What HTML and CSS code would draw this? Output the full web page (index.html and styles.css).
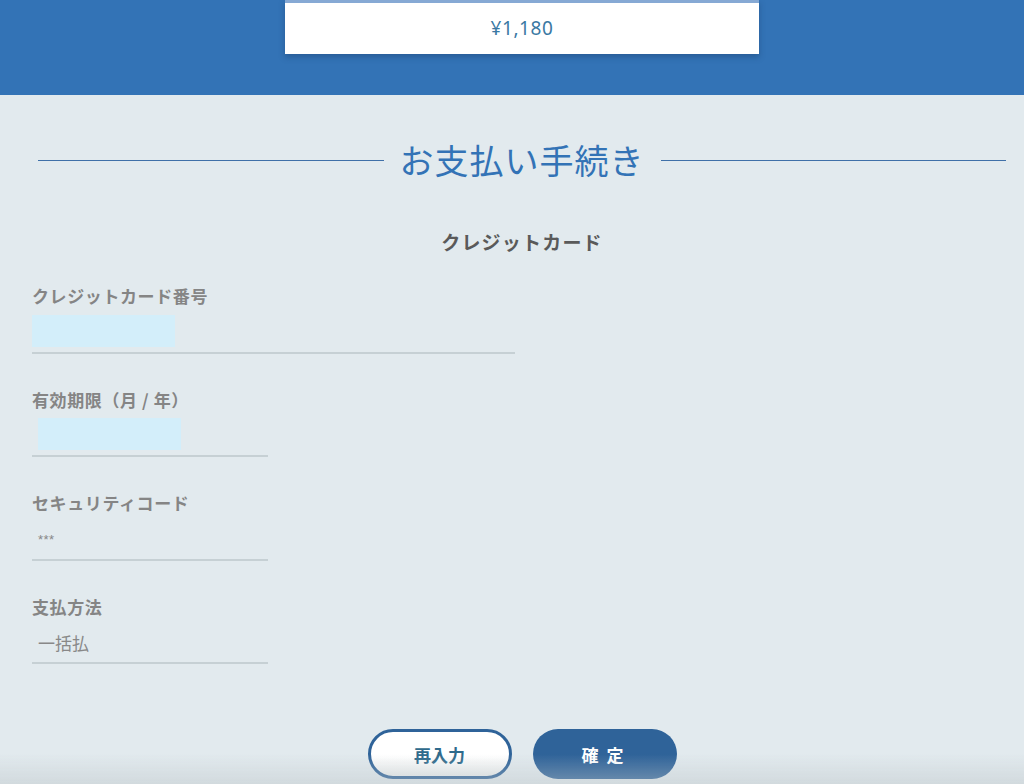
FILE: index.html
```html
<!DOCTYPE html>
<html lang="ja">
<head>
  <meta charset="UTF-8">
  <title>お支払い手続き</title>
  <meta name="viewport" content="width=device-width, initial-scale=1">
  <link rel="stylesheet" href="styles.css">
</head>
<body>
  <header class="top-band">
    <div class="price-box">¥1,180</div>
  </header>

  <main class="page">
    <h1 class="page-title"><span>お支払い手続き</span></h1>

    <h2 class="method-title">クレジットカード</h2>

    <form class="pay-form">
      <div class="field">
        <label>クレジットカード番号</label>
        <div class="input-line wide">
          <div class="autofill"></div>
        </div>
      </div>

      <div class="field">
        <label>有効期限（月 / 年）</label>
        <div class="input-line">
          <div class="autofill shifted"></div>
        </div>
      </div>

      <div class="field">
        <label>セキュリティコード</label>
        <div class="input-line">
          <span class="masked">***</span>
        </div>
      </div>

      <div class="field">
        <label>支払方法</label>
        <div class="input-line">
          <span class="value">一括払</span>
        </div>
      </div>

      <div class="actions">
        <button type="button" class="btn btn-reset">再入力</button>
        <button type="button" class="btn btn-submit">確 定</button>
      </div>
    </form>
  </main>

  <div class="bottom-fade"></div>
</body>
</html>
```

FILE: styles.css
```css
html, body {
  margin: 0;
  padding: 0;
}
body {
  font-family: "Noto Sans CJK JP", "Noto Sans", sans-serif;
  background: #e2eaee;
  color: #808080;
  height: 784px;
  overflow: hidden;
}

/* top blue band with price */
.top-band {
  background: #3373b6;
  height: 95px;
  padding: 0 18px 0 38px;
  box-sizing: border-box;
}
.price-box {
  width: 474px;
  height: 54px;
  margin: 0 auto;
  box-sizing: border-box;
  border-top: 3px solid #86a9d4;
  background: #fff;
  box-shadow: 0 3px 6px rgba(20,50,90,0.35);
  color: #3a78a3;
  font-family: "Noto Sans", sans-serif;
  font-size: 19px;
  letter-spacing: 0.6px;
  line-height: 50px;
  text-align: center;
}

.page {
  padding: 0 18px 0 38px;
}

/* heading with side rules */
.page-title {
  display: flex;
  align-items: center;
  gap: 16px;
  margin: 40px 0 0;
  height: 48px;
  font-size: 34px;
  font-weight: 400;
  letter-spacing: 1px;
  color: #3373b6;
}
.page-title::before,
.page-title::after {
  content: "";
  flex: 1;
  height: 1px;
  background: #3f70a8;
  margin-top: 2px;
}

.method-title {
  margin: 45px 0 0;
  text-align: center;
  font-size: 19px;
  line-height: 28px;
  font-weight: 700;
  color: #5a5a5a;
  letter-spacing: 1.2px;
}

.pay-form {
  margin: 28px 0 0 -6px;
}
.field {
  margin-bottom: 34px;
}
.field label {
  display: block;
  font-size: 17px;
  line-height: 24px;
  font-weight: 700;
  letter-spacing: 0.6px;
  color: #858585;
}
.input-line {
  width: 236px;
  height: 36.5px;
  padding-top: 7px;
  border-bottom: 2px solid #c6d0d4;
}
.input-line.wide {
  width: 483px;
}
.autofill {
  width: 143px;
  height: 32px;
  background: #d3eefa;
}
.autofill.shifted {
  margin-left: 6px;
  margin-top: -1px;
}
.masked {
  display: block;
  padding: 10px 0 0 6px;
  font-family: "Liberation Sans", sans-serif;
  font-size: 13px;
  line-height: 16px;
  color: #888;
  letter-spacing: 0.5px;
}
.value {
  display: block;
  padding: 4px 0 0 6px;
  font-size: 17px;
  color: #888;
}

/* buttons */
.actions {
  display: flex;
  justify-content: center;
  gap: 21px;
  margin-top: 65px;
  margin-left: 6px;
}
.btn {
  width: 144px;
  height: 50px;
  border-radius: 25px;
  font-family: inherit;
  font-size: 17px;
  font-weight: 700;
  cursor: pointer;
  box-sizing: border-box;
}
.btn-reset {
  background: linear-gradient(#ffffff 55%, #ecefef);
  border: 3px solid #2f6399;
  color: #2e6a8c;
}
.btn-submit {
  background: #2f6399;
  border: none;
  color: #fff;
  letter-spacing: 2px;
  padding-left: 4px;
}

.bottom-fade {
  position: fixed;
  left: 0;
  right: 0;
  bottom: 0;
  height: 30px;
  background: linear-gradient(rgba(200,208,212,0), rgba(190,198,202,0.45));
  pointer-events: none;
}
```
